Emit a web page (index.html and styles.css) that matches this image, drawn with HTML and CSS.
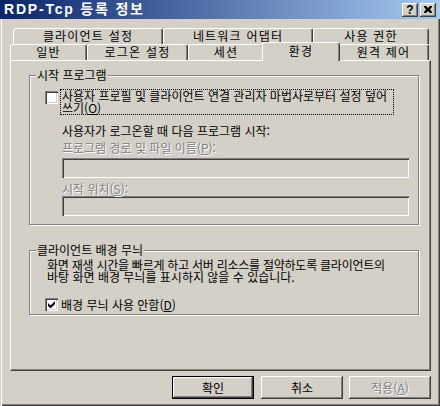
FILE: index.html
```html
<!DOCTYPE html>
<html lang="ko">
<head>
  <meta charset="UTF-8" />
  <title>RDP-Tcp 등록 정보</title>
  <link rel="stylesheet" href="styles.css">
</head>
<body>

<div class="window">
  <div class="titlebar">
    <span class="title">RDP-Tcp 등록 정보</span>
    <div class="cap-btns">
      <span class="cap-btn help">?</span>
      <span class="cap-btn">
        <svg width="8" height="7" viewBox="0 0 8 7">
          <path d="M0 0h2l2 2 2-2h2v1l-2 2.5 2 2.5v1h-2l-2-2-2 2h-2v-1l2-2.5-2-2.5z" fill="#000"/>
        </svg>
      </span>
    </div>
  </div>

  <div class="client">
    <div class="tab-row back">
      <div class="tab t-client">클라이언트 설정</div>
      <div class="tab t-net">네트워크 어댑터</div>
      <div class="tab t-perm">사용 권한</div>
    </div>
    <div class="tab-row front">
      <div class="tab t-general">일반</div>
      <div class="tab t-logon">로그온 설정</div>
      <div class="tab t-session">세션</div>
      <div class="tab t-env active">환경</div>
      <div class="tab t-remote">원격 제어</div>
    </div>

    <div class="panel">
      <div class="group group-start">
        <div class="group-title">시작 프로그램</div>
        <div class="check-row">
          <span class="checkbox"></span>
          <span class="focus-label">사용자 프로필 및 클라이언트 연결 관리자 마법사로부터 설정 덮어<br>쓰기(<u>O</u>)</span>
        </div>
        <div class="indent">
          <div class="label first">사용자가 로그온할 때 다음 프로그램 시작:</div>
          <div class="label disabled">프로그램 경로 및 파일 이름(<u>P</u>):</div>
          <div class="input"></div>
          <div class="label disabled">시작 위치(<u>S</u>):</div>
          <div class="input second"></div>
        </div>
      </div>

      <div class="group group-wall">
        <div class="group-title">클라이언트 배경 무늬</div>
        <div class="desc"><span class="desc-a">화면 재생 시간을 빠르게 하고 서버 리소스를 절약하도록 클라이언트의</span><br>바탕 화면 배경 무늬를 표시하지 않을 수 있습니다.</div>
        <div class="check-row wall">
          <span class="checkbox checked">
            <svg width="7" height="7" viewBox="0 0 7 7">
              <path d="M0 2v3l2 2h1l4-4v-3l-4 4h-1z" fill="#000"/>
            </svg>
          </span>
          <span class="check-label">배경 무늬 사용 안함(<u>D</u>)</span>
        </div>
      </div>
    </div>

    <div class="buttons">
      <div class="btn default">확인</div>
      <div class="btn cancel">취소</div>
      <div class="btn apply disabled">적용(<u>A</u>)</div>
    </div>
  </div>
</div>

</body>
</html>
```

FILE: styles.css
```css
* {
  box-sizing: border-box;
}

body {
  margin: 0;
  font-family: "Noto Sans CJK KR", sans-serif;
  font-size: 12px;
  color: #000;
}

.window {
  width: 440px;
  height: 406px;
  background: #d4d0c8;
  box-shadow: inset 1px 1px #d4d0c8, inset 2px 2px #fff,
              inset -1px -1px #404040, inset -2px -2px #808080;
}

/* title bar */
.titlebar {
  height: 19px;
  display: flex;
  align-items: center;
  padding: 0 4px;
  background: linear-gradient(to right, #0a246a, #a6caf0);
}

.title {
  flex: 1;
  color: #fff;
  font-family: "Liberation Sans", "Noto Sans CJK KR", sans-serif;
  font-size: 14px;
  font-weight: bold;
  letter-spacing: 1.8px;
  line-height: 15px;
}

.cap-btns {
  display: flex;
  gap: 2px;
}

.cap-btn {
  width: 16px;
  height: 14px;
  display: flex;
  align-items: center;
  justify-content: center;
  background: #d4d0c8;
  box-shadow: inset -1px -1px #404040, inset 1px 1px #fff, inset -2px -2px #808080;
}

.cap-btn.help {
  font-family: "Liberation Sans", sans-serif;
  font-size: 12px;
  font-weight: bold;
  line-height: 14px;
}

/* tabs */
.client {
  padding: 9px 9px 0 10px;
}

.tab-row {
  display: flex;
  height: 16px;
}

.tab-row.back {
  margin-left: 3px;
}

.tab {
  height: 16px;
  border: 1px solid;
  border-color: #fff #404040 transparent #fff;
  border-bottom: 0;
  border-radius: 3px 3px 0 0;
  box-shadow: inset -1px 0 #808080;
  text-align: center;
  line-height: 14px;
  letter-spacing: 1.2px;
  white-space: nowrap;
}

.t-client { width: 150px; }
.t-net { width: 150px; }
.t-perm { width: 116px; }
.t-general { width: 77px; }
.t-logon { width: 101px; }
.t-session { width: 76px; }
.t-env { width: 74px; }
.t-remote { width: 91px; }

.tab.active {
  width: 78px;
  height: 19px;
  margin: -2px -2px 0;
  position: relative;
  z-index: 1;
  background: #d4d0c8;
  line-height: 15px;
}

/* panel */
.panel {
  width: 421px;
  height: 311px;
  border: 1px solid;
  border-color: #fff #404040 #404040 #fff;
  box-shadow: inset -1px -1px #808080;
  padding: 14px 0 0 18px;
}

.group {
  width: 390px;
  border: 1px solid #808080;
  box-shadow: inset 1px 1px #fff, 1px 1px #fff;
}

.group-start {
  height: 150px;
}

.group-wall {
  height: 65px;
  margin-top: 25px;
}

.group-title {
  display: table;
  margin: -7px 0 0 6px;
  padding: 0 1px;
  background: #d4d0c8;
  line-height: 12px;
}

.check-row {
  display: flex;
  align-items: flex-start;
  margin: 8px 0 0 15px;
}

.checkbox {
  width: 13px;
  height: 13px;
  flex: none;
  margin-top: 2px;
  display: flex;
  align-items: center;
  justify-content: center;
  background: #fff;
  box-shadow: inset 1px 1px #808080, inset 2px 2px #404040,
              inset -1px -1px #fff, inset -2px -2px #d4d0c8;
}

.focus-label {
  width: 334px;
  margin-left: 2px;
  padding: 0 1px;
  border: 1px dotted #000;
  line-height: 12px;
  white-space: nowrap;
}

.indent {
  margin-left: 32px;
}

.label {
  line-height: 12px;
  margin-top: 5px;
  white-space: nowrap;
}

.label.first {
  margin-top: 10px;
}

.disabled {
  color: #808080;
  text-shadow: 1px 1px #fff;
}

.input {
  width: 347px;
  height: 20px;
  margin-top: 4px;
  box-shadow: inset 1px 1px #808080, inset 2px 2px #404040,
              inset -1px -1px #fff, inset -2px -2px #d4d0c8;
}

.input.second {
  margin-top: 1px;
}

.desc {
  margin: 3px 0 0 17px;
  line-height: 12px;
  white-space: nowrap;
}

.desc-a {
  letter-spacing: -0.25px;
}

.check-row.wall {
  margin-top: 15px;
  align-items: center;
}

.check-row.wall .checkbox {
  margin-top: 0;
}

.check-label {
  margin-left: 2px;
  padding-left: 1px;
  line-height: 13px;
}

/* buttons */
.buttons {
  display: flex;
  justify-content: flex-end;
  margin-top: 5px;
}

.btn {
  width: 82px;
  height: 23px;
  text-align: center;
  line-height: 23px;
  background: #d4d0c8;
  box-shadow: inset -1px -1px #404040, inset 1px 1px #fff, inset -2px -2px #808080;
}

.btn.default {
  border: 1px solid #000;
  line-height: 21px;
}

.btn.cancel {
  margin-left: 7px;
}

.btn.apply {
  margin-left: 6px;
}
```
